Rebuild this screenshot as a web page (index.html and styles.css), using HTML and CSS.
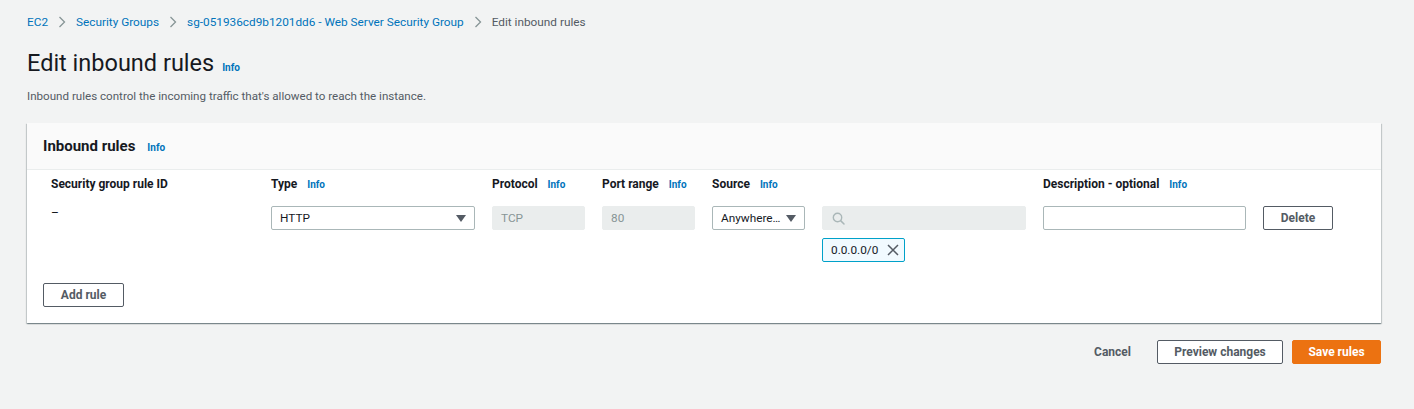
FILE: index.html
```html
<!DOCTYPE html>
<html>
<head>
<meta charset="utf-8">
<link rel="stylesheet" href="styles.css">
</head>
<body>
<div class="page">
  <nav class="crumbs">
    <a class="crumb">EC2</a>
    <span class="sep"><svg width="8" height="12" viewBox="0 0 8 12"><path d="M1.5 1 L6.5 6 L1.5 11" fill="none" stroke="#879596" stroke-width="1.3"/></svg></span>
    <a class="crumb">Security Groups</a>
    <span class="sep"><svg width="8" height="12" viewBox="0 0 8 12"><path d="M1.5 1 L6.5 6 L1.5 11" fill="none" stroke="#879596" stroke-width="1.3"/></svg></span>
    <a class="crumb">sg-051936cd9b1201dd6 - Web Server Security Group</a>
    <span class="sep"><svg width="8" height="12" viewBox="0 0 8 12"><path d="M1.5 1 L6.5 6 L1.5 11" fill="none" stroke="#879596" stroke-width="1.3"/></svg></span>
    <span class="crumb current">Edit inbound rules</span>
  </nav>

  <div class="title-row">
    <h1 class="title">Edit inbound rules</h1>
    <a class="info">Info</a>
  </div>
  <p class="desc">Inbound rules control the incoming traffic that's allowed to reach the instance.</p>

  <section class="card">
    <header class="card-head">
      <h2 class="card-title">Inbound rules</h2>
      <a class="info">Info</a>
    </header>
    <div class="card-body">
      <div class="rules">
        <div class="hdr">Security group rule ID</div>
        <div class="hdr">Type <a class="info">Info</a></div>
        <div class="hdr">Protocol <a class="info">Info</a></div>
        <div class="hdr">Port range <a class="info">Info</a></div>
        <div class="hdr">Source <a class="info">Info</a></div>
        <div class="hdr"></div>
        <div class="hdr">Description - optional <a class="info">Info</a></div>
        <div class="hdr"></div>

        <div class="cell dash">–</div>
        <div class="cell">
          <div class="select wide">HTTP<span class="caret"></span></div>
        </div>
        <div class="cell"><div class="input disabled">TCP</div></div>
        <div class="cell"><div class="input disabled">80</div></div>
        <div class="cell"><div class="select">Anywhere…<span class="caret"></span></div></div>
        <div class="cell stack">
          <div class="input disabled search">
            <svg width="13" height="13" viewBox="0 0 13 13"><circle cx="5.5" cy="5.5" r="4.2" fill="none" stroke="#aab7b8" stroke-width="1.4"/><path d="M8.6 8.6 L12 12" stroke="#aab7b8" stroke-width="1.5" stroke-linecap="round"/></svg>
          </div>
          <div class="token">0.0.0.0/0
            <svg width="12" height="12" viewBox="0 0 12 12"><path d="M1 1 L11 11 M11 1 L1 11" stroke="#545b64" stroke-width="1.5"/></svg>
          </div>
        </div>
        <div class="cell"><div class="input"></div></div>
        <div class="cell"><button class="btn small">Delete</button></div>
      </div>
      <button class="btn add">Add rule</button>
    </div>
  </section>

  <div class="actions">
    <a class="cancel">Cancel</a>
    <button class="btn normal">Preview changes</button>
    <button class="btn primary">Save rules</button>
  </div>
</div>
</body>
</html>
```

FILE: styles.css
```css
* { box-sizing: border-box; }
html, body { margin: 0; padding: 0; }
body {
  background: #f2f3f3;
  font-family: Roboto, "Liberation Sans", Arial, sans-serif;
  color: #16191f;
  width: 1414px;
  height: 409px;
  overflow: hidden;
}
.page { padding: 14px 33px 0 27px; }

.crumbs { display: flex; align-items: center; height: 16px; font-size: 11.8px; }
.crumb { color: #0073bb; text-decoration: none; }
.crumb.current { color: #545b64; }
.sep { display: flex; align-items: center; margin: 0 10px 0 10px; }

.title-row { display: flex; align-items: baseline; margin-top: 18px; }
.title { font-size: 23.5px; font-weight: 400; margin: 0; line-height: 30px; }
.info { color: #0073bb; font-size: 10px; font-weight: 700; margin-left: 8px; }
.desc { margin: 10px 0 0; font-size: 11.6px; color: #545b64; line-height: 16px; }

.card {
  margin-top: 19px;
  width: 1354px;
  background: #fff;
  box-shadow: 0 1px 1px 0 rgba(0,28,36,.3), 1px 1px 1px 0 rgba(0,28,36,.15), -1px 1px 1px 0 rgba(0,28,36,.15);
}
.card-head {
  display: flex; align-items: baseline;
  background: #fafafa;
  border-bottom: 1px solid #eaeded;
  padding: 13px 16px 13px;
  height: 47px;
}
.card-title { margin: 0; font-size: 15px; font-weight: 700; line-height: 20px; }
.card-head .info { margin-left: 12px; }
.card-body { padding: 6px 16px 16px; }

.rules {
  display: grid;
  grid-template-columns: 203px 204px 93px 93px 93px 204px 203px auto;
  column-gap: 17px;
  row-gap: 14px;
  padding-left: 8px;
  align-items: start;
}
.hdr { font-size: 12px; font-weight: 700; line-height: 16px; height: 16px; white-space: nowrap; }
.hdr .info { margin-left: 7px; font-size: 10px; }
.cell { font-size: 12px; }
.dash { color: #16191f; line-height: 14px; padding-left: 0; }
.stack { display: flex; flex-direction: column; gap: 8px; align-items: flex-start; }

.select, .input {
  height: 24px;
  border: 1px solid #aab7b8;
  border-radius: 2px;
  background: #fff;
  display: flex; align-items: center;
  padding: 0 8px;
  font-size: 11.8px;
  color: #16191f;
  position: relative;
}
.select { justify-content: space-between; padding-right: 8px; }
.caret {
  width: 0; height: 0;
  border-left: 5px solid transparent;
  border-right: 5px solid transparent;
  border-top: 7px solid #545b64;
}
.input { width: 100%; }
.input.disabled { background: #eaeded; border-color: #eaeded; color: #879596; }
.search { padding-left: 9px; }
.token {
  height: 24px;
  width: 83px;
  display: flex; align-items: center; justify-content: space-between;
  padding: 0 5px 0 8px;
  border: 1px solid #00a1c9;
  border-radius: 2px;
  background: #f1faff;
  font-size: 11.8px;
  color: #16191f;
}

.btn {
  font-family: inherit;
  font-weight: 700;
  font-size: 12px;
  color: #545b64;
  background: #fff;
  border: 1px solid #545b64;
  border-radius: 2px;
  height: 24px;
  padding: 0 16px;
  cursor: pointer;
}
.btn.small { width: 70px; padding: 0; }
.btn.add { margin-top: 21px; width: 81px; padding: 0; }

.actions {
  display: flex; align-items: center; justify-content: flex-end;
  width: 1354px;
  margin-top: 17px;
  gap: 9px;
}
.cancel { font-size: 12px; font-weight: 700; color: #545b64; margin-right: 17px; }
.btn.normal { width: 126px; padding: 0; }
.btn.primary { width: 89px; padding: 0; background: #ec7211; border-color: #ec7211; color: #fff; }
```
